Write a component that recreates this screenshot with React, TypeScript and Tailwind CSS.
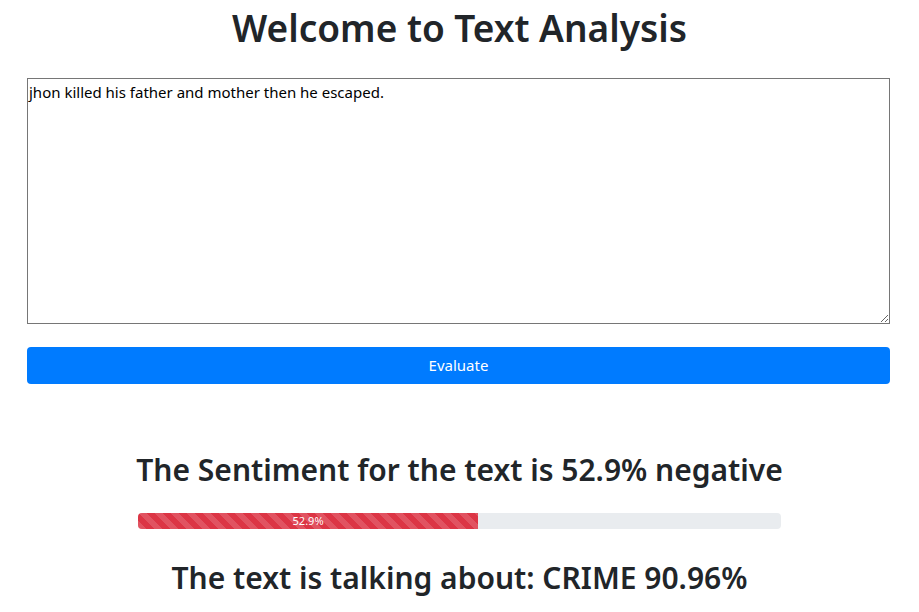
import React from "react";

export default function App() {
  const pct = 52.9;
  return (
    <div className="w-[919px] min-h-[612px] bg-white text-[#212529] font-['Noto_Sans','Open_Sans',sans-serif]">
      <h1 className="pt-[4px] text-center text-[37px] leading-[48px] font-semibold">Welcome to Text Analysis</h1>
      <div className="mx-[27px] mt-[26px] flex flex-col">
        <textarea
          className="w-[863px] h-[246px] border border-[#767676] px-[1px] pt-[4px] text-[15px] leading-[18px] text-black resize-y outline-none font-['Noto_Sans',sans-serif]"
          defaultValue="jhon killed his father and mother then he escaped."
        />
        <button className="mt-[23px] w-[863px] h-[37px] rounded-[4px] bg-[#007bff] text-white text-[15px] leading-[24px] pb-[2px]">
          Evaluate
        </button>
      </div>
      <div className="mx-auto mt-[67px] w-[643px] flex flex-col items-center">
        <h2 className="text-[30px] leading-[38px] font-semibold whitespace-nowrap">The Sentiment for the text is 52.9% negative</h2>
        <div className="mt-[24px] w-full h-[16px] rounded-[4px] bg-[#e9ecef] overflow-hidden flex">
          <div
            className="h-full bg-[#dc3545] bg-[linear-gradient(45deg,rgba(255,255,255,.15)_25%,transparent_25%,transparent_50%,rgba(255,255,255,.15)_50%,rgba(255,255,255,.15)_75%,transparent_75%,transparent)] bg-[length:16px_16px] text-white text-[11px] leading-[16px] text-center"
            style={{ width: `${pct}%` }}
          >
            52.9%
          </div>
        </div>
        <h2 className="mt-[30px] text-[30px] leading-[38px] font-semibold whitespace-nowrap">The text is talking about: CRIME 90.96%</h2>
      </div>
    </div>
  );
}
